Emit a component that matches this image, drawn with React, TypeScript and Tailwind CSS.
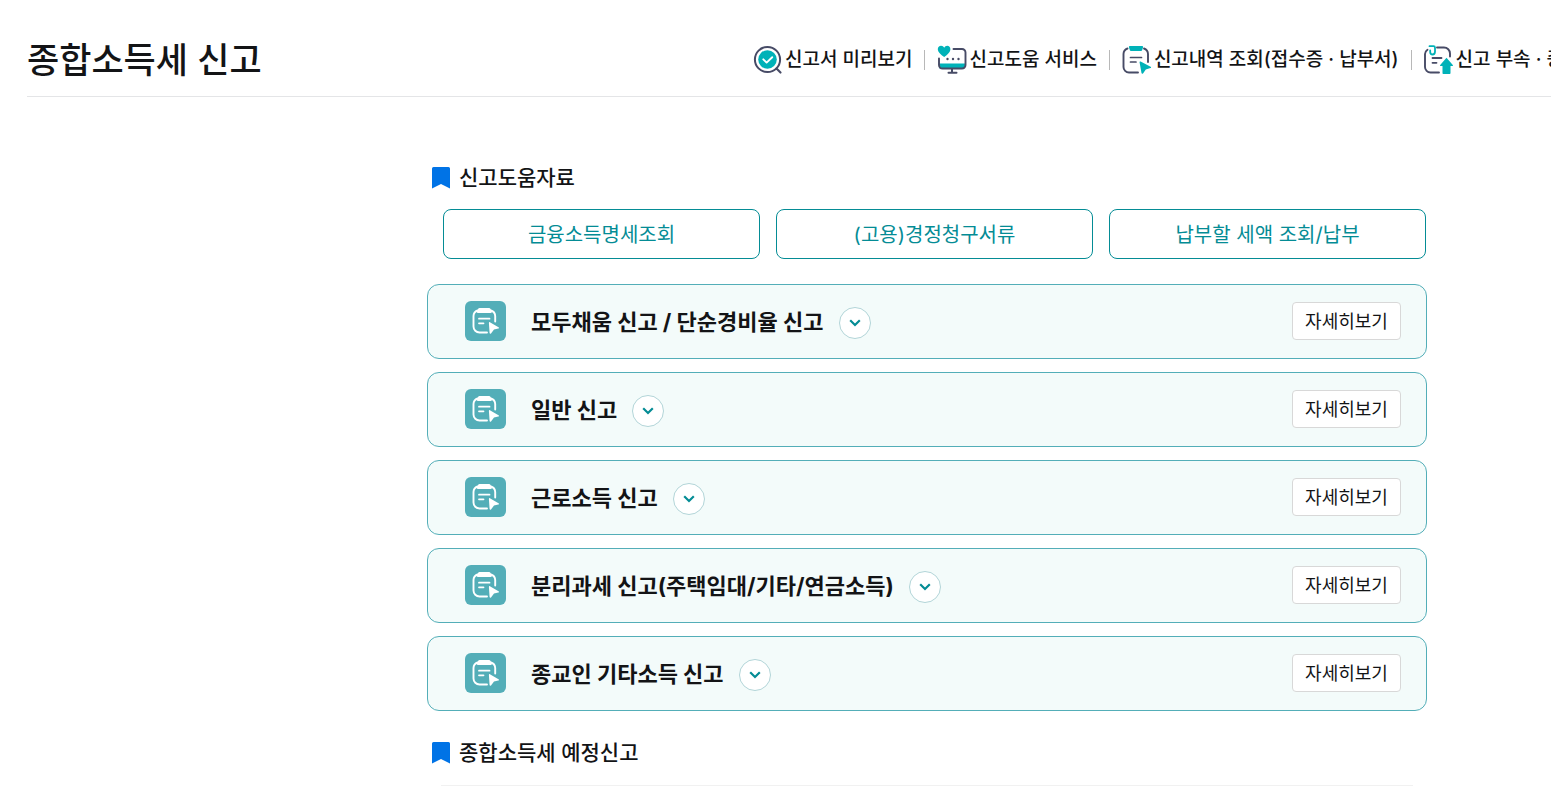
import { useState } from "react";
import type { ReactNode } from "react";

function PreviewIcon() {
  return (
    <svg width="30" height="30" viewBox="0 0 30 30" fill="none" aria-hidden="true">
      <circle cx="14.5" cy="14.5" r="12.6" stroke="#474b66" strokeWidth="2" />
      <path d="M23.5 23.5l4 4" stroke="#474b66" strokeWidth="2.2" strokeLinecap="round" />
      <circle cx="14.5" cy="14.5" r="9.3" fill="#00b2b8" />
      <path d="M10.3 14.3l3.3 3.3 5.6-5.4" stroke="#fff" strokeWidth="1.9" strokeLinecap="round" strokeLinejoin="round" />
    </svg>
  );
}

function HelpIcon() {
  return (
    <svg width="30" height="30" viewBox="0 0 30 30" fill="none" aria-hidden="true">
      <path d="M2 18.500h26v3a2.500 2.500 0 0 1-2.500 2.500h-21a2.500 2.500 0 0 1-2.500-2.500z" fill="#00b2b8" />
      <path d="M16.500 4H25a3.500 3.500 0 0 1 3.500 3.500V20a3.500 3.500 0 0 1-3.500 3.500H5.500A3.500 3.500 0 0 1 2 20v-6.500" stroke="#474b66" strokeWidth="1.900" strokeLinecap="round" />
      <path d="M15 24v3.500M11.500 27.800h8" stroke="#474b66" strokeWidth="2" strokeLinecap="round" />
      <path d="M7.200 12C4.500 10 .8 7.200.8 4.200.8 2.300 2.200.8 4.100.8c1.400 0 2.500.8 3.100 2 .6-1.200 1.700-2 3.100-2 1.700 0 3.100 1.500 3.100 3.400 0 3-3.500 5.800-6.200 7.800z" fill="#00b2b8" />
      <circle cx="10.500" cy="14" r="1.200" fill="#474b66" />
      <circle cx="16" cy="14" r="1.200" fill="#474b66" />
      <circle cx="21.500" cy="14" r="1.200" fill="#474b66" />
    </svg>
  );
}

function HistoryIcon() {
  return (
    <svg width="30" height="30" viewBox="0 0 30 30" fill="none" aria-hidden="true">
      <path d="M5.500 3.500A6 6 0 0 0 1.500 9v13A5.500 5.500 0 0 0 7 27.500H16M22 3.500A6 6 0 0 1 26 9v8" stroke="#474b66" strokeWidth="1.900" strokeLinecap="round" />
      <path d="M8 1h12c.8 0 1.300.7 1 1.500l-.8 2.500c-.2.700-.8 1-1.500 1H9.300c-.7 0-1.300-.3-1.500-1L7 2.500C6.700 1.700 7.200 1 8 1z" fill="#00b2b8" />
      <path d="M8.500 12.500h11M8.500 17h5.500" stroke="#474b66" strokeWidth="1.700" strokeLinecap="round" />
      <path d="M18.600 16.500l10 5.200c.7.400.6 1.200-.1 1.400l-4.700 1.300-2.800 4c-.5.700-1.400.4-1.500-.4l-1.900-10.600c-.1-.7.400-1.200 1-.9z" fill="#00b2b8" />
    </svg>
  );
}

function UploadIcon() {
  return (
    <svg width="30" height="30" viewBox="0 0 30 30" fill="none" aria-hidden="true">
      <path d="M3.500 4.800A5.500 5.500 0 0 0 1 9v13A5.500 5.500 0 0 0 6.500 27.500H15M13 2.500h7A6 6 0 0 1 26 8.500V11.500" stroke="#474b66" strokeWidth="1.900" strokeLinecap="round" />
      <path d="M5.500 1.200H9.500C10.500 1.200 11 1.700 11 2.700V6.500C11 8.500 9.900 9.500 8.500 9.500S6.200 8.500 6.200 7V5.500" stroke="#00b2b8" strokeWidth="1.800" strokeLinecap="round" />
      <path d="M8.500 13h9M8.500 17.800h4" stroke="#474b66" strokeWidth="1.800" strokeLinecap="round" />
      <path d="M22.500 12.800l6.300 7.200c.4.500.1 1-.5 1H26.500V28c0 .6-.4 1-1 1h-6c-.6 0-1-.4-1-1v-7h-1.800c-.6 0-.9-.5-.5-1z" fill="#00b2b8" />
    </svg>
  );
}

function ReportIcon() {
  return (
    <svg className="shrink-0" width="41" height="40" viewBox="0 0 41 40" fill="none" aria-hidden="true">
      <rect width="41" height="40" rx="6" fill="#53aeb8" />
      <path d="M12.500 9.500A6 6 0 0 0 8.500 15v10.500a6 6 0 0 0 6 6H22M26 9.500a6 6 0 0 1 4.200 5.500v5.500" stroke="#fff" strokeWidth="1.900" strokeLinecap="round" />
      <path d="M14.500 7h9.600c.6 0 1 .3 1.300.8l1.300 2.200c.6 1 0 2-1.100 2H13c-1.100 0-1.700-1-1.100-2l1.300-2.200c.3-.5.700-.8 1.300-.8z" fill="#fff" />
      <path d="M14 17.700h10.500M14 22.300h4.500" stroke="#fff" strokeWidth="1.800" strokeLinecap="round" />
      <path d="M24.900 21.200l8.600 5c.7.400.6 1.200-.2 1.400l-4.300 1-3 3.800c-.5.600-1.300.4-1.400-.4l-.7-10c0-.8.400-1.200 1-.8z" fill="#fff" />
    </svg>
  );
}

const links: { label: string; icon: ReactNode }[] = [
  { label: "신고서 미리보기", icon: <PreviewIcon /> },
  { label: "신고도움 서비스", icon: <HelpIcon /> },
  { label: "신고내역 조회(접수증 · 납부서)", icon: <HistoryIcon /> },
  { label: "신고 부속 · 증빙서류 제출", icon: <UploadIcon /> },
];

const resources = ["금융소득명세조회", "(고용)경정청구서류", "납부할 세액 조회/납부"];

const reports = [
  "모두채움 신고 / 단순경비율 신고",
  "일반 신고",
  "근로소득 신고",
  "분리과세 신고(주택임대/기타/연금소득)",
  "종교인 기타소득 신고",
];

function SectionTitle({ children }: { children: ReactNode }) {
  return (
    <h2 className="flex items-center gap-[9px] pl-[5px] text-[21px] leading-8 font-medium">
      <svg width="18" height="22" viewBox="0 0 18 22" aria-hidden="true">
        <path d="M1.500 0h15A1.500 1.500 0 0 1 18 1.500V21.500L9 17 0 21.500V1.500A1.500 1.500 0 0 1 1.500 0z" fill="#0073e6" />
      </svg>
      {children}
    </h2>
  );
}

function ReportRow({ title }: { title: string }) {
  const [open, setOpen] = useState(false);
  return (
    <li className="flex h-[75px] items-center rounded-xl border border-[#53aeb8] bg-[#f3fbfa] pr-[25px] pb-px pl-[37px]">
      <ReportIcon />
      <h3 className="ml-[25px] pt-0.5 text-[22px] leading-8 font-bold">{title}</h3>
      <button
        type="button"
        aria-label={title + " 펼치기"}
        aria-expanded={open}
        onClick={() => setOpen(!open)}
        className="mt-1 ml-[15px] flex size-8 items-center justify-center rounded-full border border-[#b2d5d8] bg-white"
      >
        <svg width="12" height="8" viewBox="0 0 12 8" fill="none" aria-hidden="true">
          <path d="M1.200 1.300L6 6l4.800-4.700" stroke="#048c95" strokeWidth="2.200" />
        </svg>
      </button>
      <button
        type="button"
        className="ml-auto h-[38px] w-[109px] rounded border border-[#d8d8d8] bg-white pt-0.5 text-[18px] leading-6"
      >
        자세히보기
      </button>
    </li>
  );
}

export default function App() {
  return (
    <div className="overflow-hidden bg-white font-[Inter,'Noto_Sans_CJK_KR',sans-serif] text-[#131416]">
      <div className="min-w-[1827px] pl-[27px]">
        <header className="grid h-[97px] grid-cols-[726px_1fr] items-center border-b border-[#e4e5e7] pt-6">
          <h1 className="text-[35px] leading-[52px] font-medium">종합소득세 신고</h1>
          <nav className="flex items-center whitespace-nowrap">
            {links.map((link, i) => (
              <div key={link.label} className="flex items-center">
                {i > 0 && <span className="mx-3 h-5 w-px bg-[#b8b8b8]" />}
                <a href="#" className="flex items-center gap-0.5 text-[19px] leading-7 font-medium">
                  {link.icon}
                  {link.label}
                </a>
              </div>
            ))}
          </nav>
        </header>
        <main className="mx-auto w-[1000px] pt-[65px]">
          <SectionTitle>신고도움자료</SectionTitle>
          <div className="mt-[15px] grid grid-cols-3 gap-4 pr-px pl-4">
            {resources.map((label) => (
              <button
                key={label}
                type="button"
                className="h-[50px] rounded-lg border border-[#048c95] bg-white pt-0.5 text-[20px] leading-7 text-[#048c95]"
              >
                {label}
              </button>
            ))}
          </div>
          <ul className="mt-[25px] mb-[26px] flex flex-col gap-[13px]">
            {reports.map((title) => (
              <ReportRow key={title} title={title} />
            ))}
          </ul>
          <SectionTitle>종합소득세 예정신고</SectionTitle>
          <hr className="mx-3.5 mt-4 border-[#f1f1f1]" />
        </main>
      </div>
    </div>
  );
}
